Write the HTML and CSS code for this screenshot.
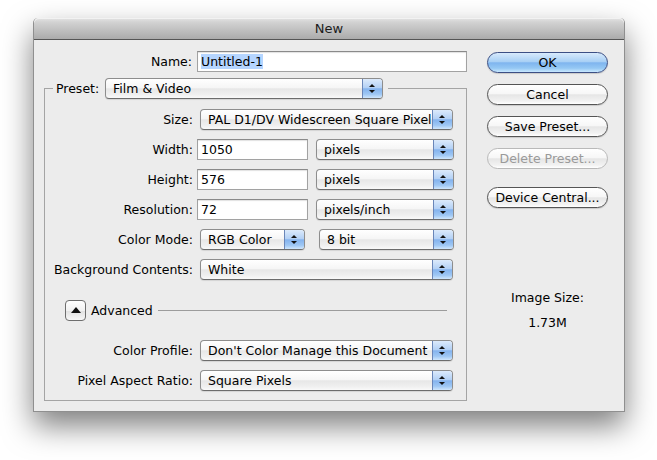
FILE: index.html
```html
<!DOCTYPE html>
<html lang="en">
<head>
    <meta charset="UTF-8">
    <title>New</title>
    <link rel="stylesheet" href="styles.css">
</head>
<body>

<div class="window">
    <div class="titlebar">New</div>

    <div class="content">
        <div class="main">
            <div class="name-row">
                <span class="name-label">Name:</span>
                <div class="textfield name-field"><span class="selected">Untitled-1</span></div>
            </div>

            <fieldset class="preset">
                <legend class="legend">
                    <span class="legend-label">Preset:</span>
                    <div class="popup preset-popup"><span class="popup-text">Film &amp; Video</span><span class="arrows"></span></div>
                </legend>

                <div class="row">
                    <span class="label">Size:</span>
                    <div class="popup wide"><span class="popup-text">PAL D1/DV Widescreen Square Pixel</span><span class="arrows"></span></div>
                </div>
                <div class="row">
                    <span class="label">Width:</span>
                    <div class="textfield short">1050</div>
                    <div class="popup unit"><span class="popup-text">pixels</span><span class="arrows"></span></div>
                </div>
                <div class="row">
                    <span class="label">Height:</span>
                    <div class="textfield short">576</div>
                    <div class="popup unit"><span class="popup-text">pixels</span><span class="arrows"></span></div>
                </div>
                <div class="row">
                    <span class="label">Resolution:</span>
                    <div class="textfield short">72</div>
                    <div class="popup unit"><span class="popup-text">pixels/inch</span><span class="arrows"></span></div>
                </div>
                <div class="row">
                    <span class="label">Color Mode:</span>
                    <div class="popup mode"><span class="popup-text">RGB Color</span><span class="arrows"></span></div>
                    <div class="popup depth"><span class="popup-text">8 bit</span><span class="arrows"></span></div>
                </div>
                <div class="row">
                    <span class="label">Background Contents:</span>
                    <div class="popup wide"><span class="popup-text">White</span><span class="arrows"></span></div>
                </div>

                <div class="advanced">
                    <div class="disclosure"></div>
                    <span class="advanced-text">Advanced</span>
                    <div class="advanced-line"></div>
                </div>

                <div class="row profile-row">
                    <span class="label">Color Profile:</span>
                    <div class="popup wide"><span class="popup-text">Don't Color Manage this Document</span><span class="arrows"></span></div>
                </div>
                <div class="row">
                    <span class="label">Pixel Aspect Ratio:</span>
                    <div class="popup wide"><span class="popup-text">Square Pixels</span><span class="arrows"></span></div>
                </div>
            </fieldset>
        </div>

        <div class="side">
            <div class="button default">OK</div>
            <div class="button">Cancel</div>
            <div class="button">Save Preset...</div>
            <div class="button disabled">Delete Preset...</div>
            <div class="button device">Device Central...</div>

            <div class="image-size">
                <p>Image Size:</p>
                <p class="size-value">1.73M</p>
            </div>
        </div>
    </div>
</div>

</body>
</html>
```

FILE: styles.css
```css
/* Global */
* {
    box-sizing: border-box;
    margin: 0;
    padding: 0;
}
body {
    min-height: 460px;
    padding: 18px 0 0 33px;
    background-color: #fff;
    font-family: 'DejaVu Sans', sans-serif;
    font-size: 12.5px;
    color: #000;
}

/* Window */
.window {
    width: 592px;
    height: 394px;
    background-color: #ececec;
    border: 1px solid #8f8f8f;
    border-top: none;
    border-radius: 5px 5px 0 0;
    box-shadow: 0 14px 30px rgba(0, 0, 0, 0.5);
}
.titlebar {
    height: 22px;
    line-height: 22px;
    text-align: center;
    font-size: 13px;
    color: #1c1c1c;
    background: linear-gradient(#e4e4e4, #d2d2d2 20%, #ababab);
    border-bottom: 1px solid #555;
    border-radius: 5px 5px 0 0;
    box-shadow: inset 0 1px 0 #f2f2f2;
}
.content {
    display: flex;
    padding: 11px 0 0 10px;
}
.main {
    width: 423px;
}

/* Name */
.name-row {
    display: flex;
    align-items: center;
    height: 21px;
}
.name-label {
    width: 148px;
    text-align: right;
    margin-right: 5px;
}
.textfield {
    height: 21px;
    line-height: 19px;
    padding-left: 3px;
    background-color: #fff;
    border: 1px solid #a2a2a2;
    border-top-color: #8a8a8a;
    box-shadow: inset 0 1px 1px rgba(0, 0, 0, 0.12);
    white-space: nowrap;
}
.name-field {
    width: 270px;
}
.selected {
    background-color: #b5d5ff;
}

/* Preset group */
.preset {
    margin-top: 6px;
    padding: 10px 0 9px 0;
    border: 1px solid #a4a4a4;
    height: 323px;
}
.legend {
    display: flex;
    align-items: center;
    margin-left: 8px;
    padding: 0 5px 0 3px;
}
.legend-label {
    width: 44px;
    margin-right: 5px;
}
.preset-popup {
    width: 278px;
}
.row {
    display: flex;
    align-items: center;
    height: 21px;
    margin-bottom: 9px;
}
.label {
    width: 148px;
    text-align: right;
    margin-right: 4px;
    white-space: nowrap;
}
.short {
    width: 111px;
}

/* Popup menus */
.popup {
    display: flex;
    height: 21px;
    background: linear-gradient(#fff, #f6f6f6 45%, #e7e7e7 52%, #efefef 80%, #f9f9f9);
    border: 1px solid #8d8d8d;
    border-bottom-color: #6c6c6c;
    border-radius: 4px;
    box-shadow: 0 1px 1px rgba(0, 0, 0, 0.1);
    overflow: hidden;
}
.row .popup {
    margin-left: 3px;
}
.popup-text {
    flex: 1;
    line-height: 19px;
    padding-left: 7px;
    white-space: nowrap;
    overflow: hidden;
}
.arrows {
    position: relative;
    width: 20px;
    border-left: 1px solid #6a86b8;
    background: linear-gradient(#dceafb, #b4d1f5 45%, #84b3ee 52%, #9ec7f4 80%, #cfe6fd);
}
.arrows::before,
.arrows::after {
    content: "";
    position: absolute;
    left: 6px;
    border-left: 3px solid transparent;
    border-right: 3px solid transparent;
}
.arrows::before {
    top: 5px;
    border-bottom: 3px solid #111;
}
.arrows::after {
    top: 11px;
    border-top: 3px solid #111;
}
.wide {
    width: 253px;
}
.unit {
    width: 138px;
    margin-left: 8px !important;
}
.mode {
    width: 105px;
}
.depth {
    width: 135px;
    margin-left: 14px !important;
}

/* Advanced */
.advanced {
    display: flex;
    align-items: center;
    height: 21px;
    margin: 20px 19px 19px 20px;
}
.disclosure {
    position: relative;
    width: 21px;
    height: 21px;
    border: 1px solid #6e6e6e;
    border-radius: 4px;
    background: linear-gradient(#fff, #f1f1f1 50%, #e2e2e2 55%, #f7f7f7);
}
.disclosure::after {
    content: "";
    position: absolute;
    left: 5px;
    top: 6px;
    border-left: 5px solid transparent;
    border-right: 5px solid transparent;
    border-bottom: 6px solid #111;
}
.advanced-text {
    margin-left: 5px;
}
.advanced-line {
    flex: 1;
    height: 1px;
    margin-left: 5px;
    background-color: #9c9c9c;
}

/* Buttons */
.side {
    width: 121px;
    margin: 1px 0 0 20px;
}
.button {
    height: 21px;
    line-height: 19px;
    margin-bottom: 11px;
    text-align: center;
    border: 1px solid #555;
    border-radius: 11px;
    background: linear-gradient(#fff, #f7f7f7 45%, #e6e6e6 52%, #f2f2f2 85%, #fff);
    box-shadow: 0 1px 1px rgba(0, 0, 0, 0.15);
}
.button.default {
    border-color: #3c4f84;
    background: linear-gradient(#d8eafc, #a9d0f5 45%, #7fb5ef 52%, #95c8f4 80%, #c9e8fe);
}
.button.disabled {
    color: #9a9a9a;
    border-color: #b9b9b9;
    box-shadow: none;
}
.button.device {
    margin-top: 18px;
}
.image-size {
    margin-top: 82px;
    text-align: center;
}
.size-value {
    margin-top: 10px;
}
```
